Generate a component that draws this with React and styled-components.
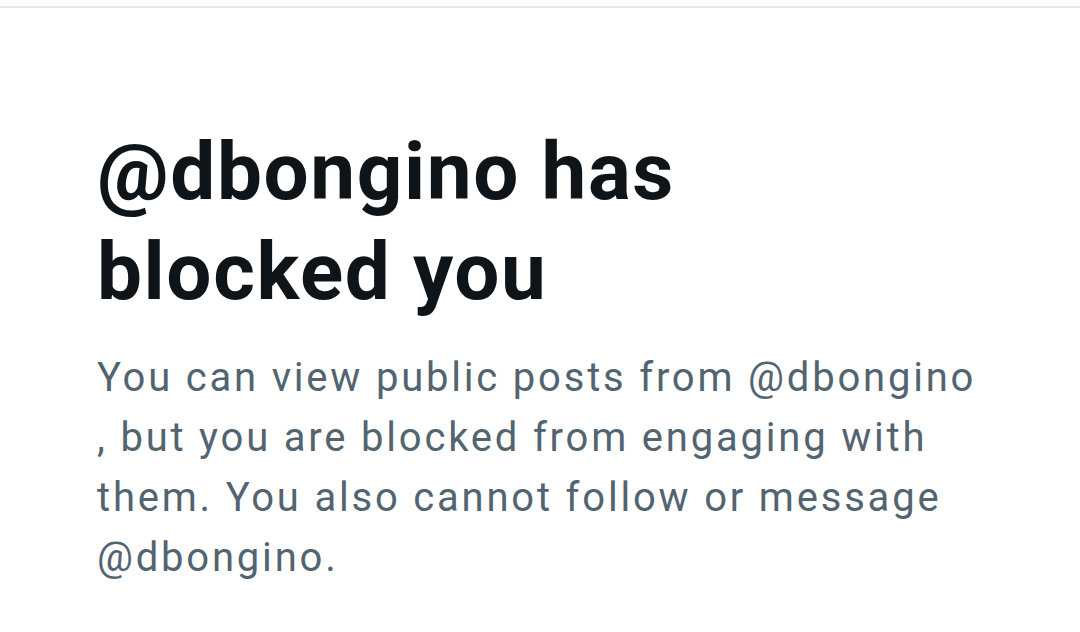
import React from 'react';
import styled, { createGlobalStyle } from 'styled-components';

const GlobalStyle = createGlobalStyle`
  html, body {
    margin: 0;
    padding: 0;
    background: #ffffff;
  }
  body {
    font-family: Roboto, "Noto Sans", "Liberation Sans", sans-serif;
  }
`;

const Page = styled.div`
  width: 1080px;
  height: 632px;
  overflow: hidden;
  background: #ffffff;
  padding-top: 6px;
  box-sizing: border-box;
`;

const Divider = styled.div`
  height: 2px;
  background: #e7eaeb;
`;

const EmptyState = styled.section`
  display: flex;
  flex-direction: column;
  gap: 26px;
  padding: 114px 60px 0 97px;
`;

const Title = styled.h1`
  margin: 0;
  font-size: 80px;
  line-height: 100px;
  font-weight: 700;
  letter-spacing: 1.6px;
  color: #0f1419;
`;

const Message = styled.p`
  margin: 0;
  max-width: 885px;
  font-size: 40px;
  line-height: 60px;
  font-weight: 400;
  letter-spacing: 2.8px;
  color: #536471;
`;

const handle = 'dbongino';

export default function App() {
  return (
    <Page>
      <GlobalStyle />
      <Divider />
      <EmptyState>
        <Title>
          @{handle} has
          <br />
          blocked you
        </Title>
        <Message>
          You can view public posts from @{handle}
          <br />
          , but you are blocked from engaging with them. You also cannot follow or message @{handle}.
        </Message>
      </EmptyState>
    </Page>
  );
}
